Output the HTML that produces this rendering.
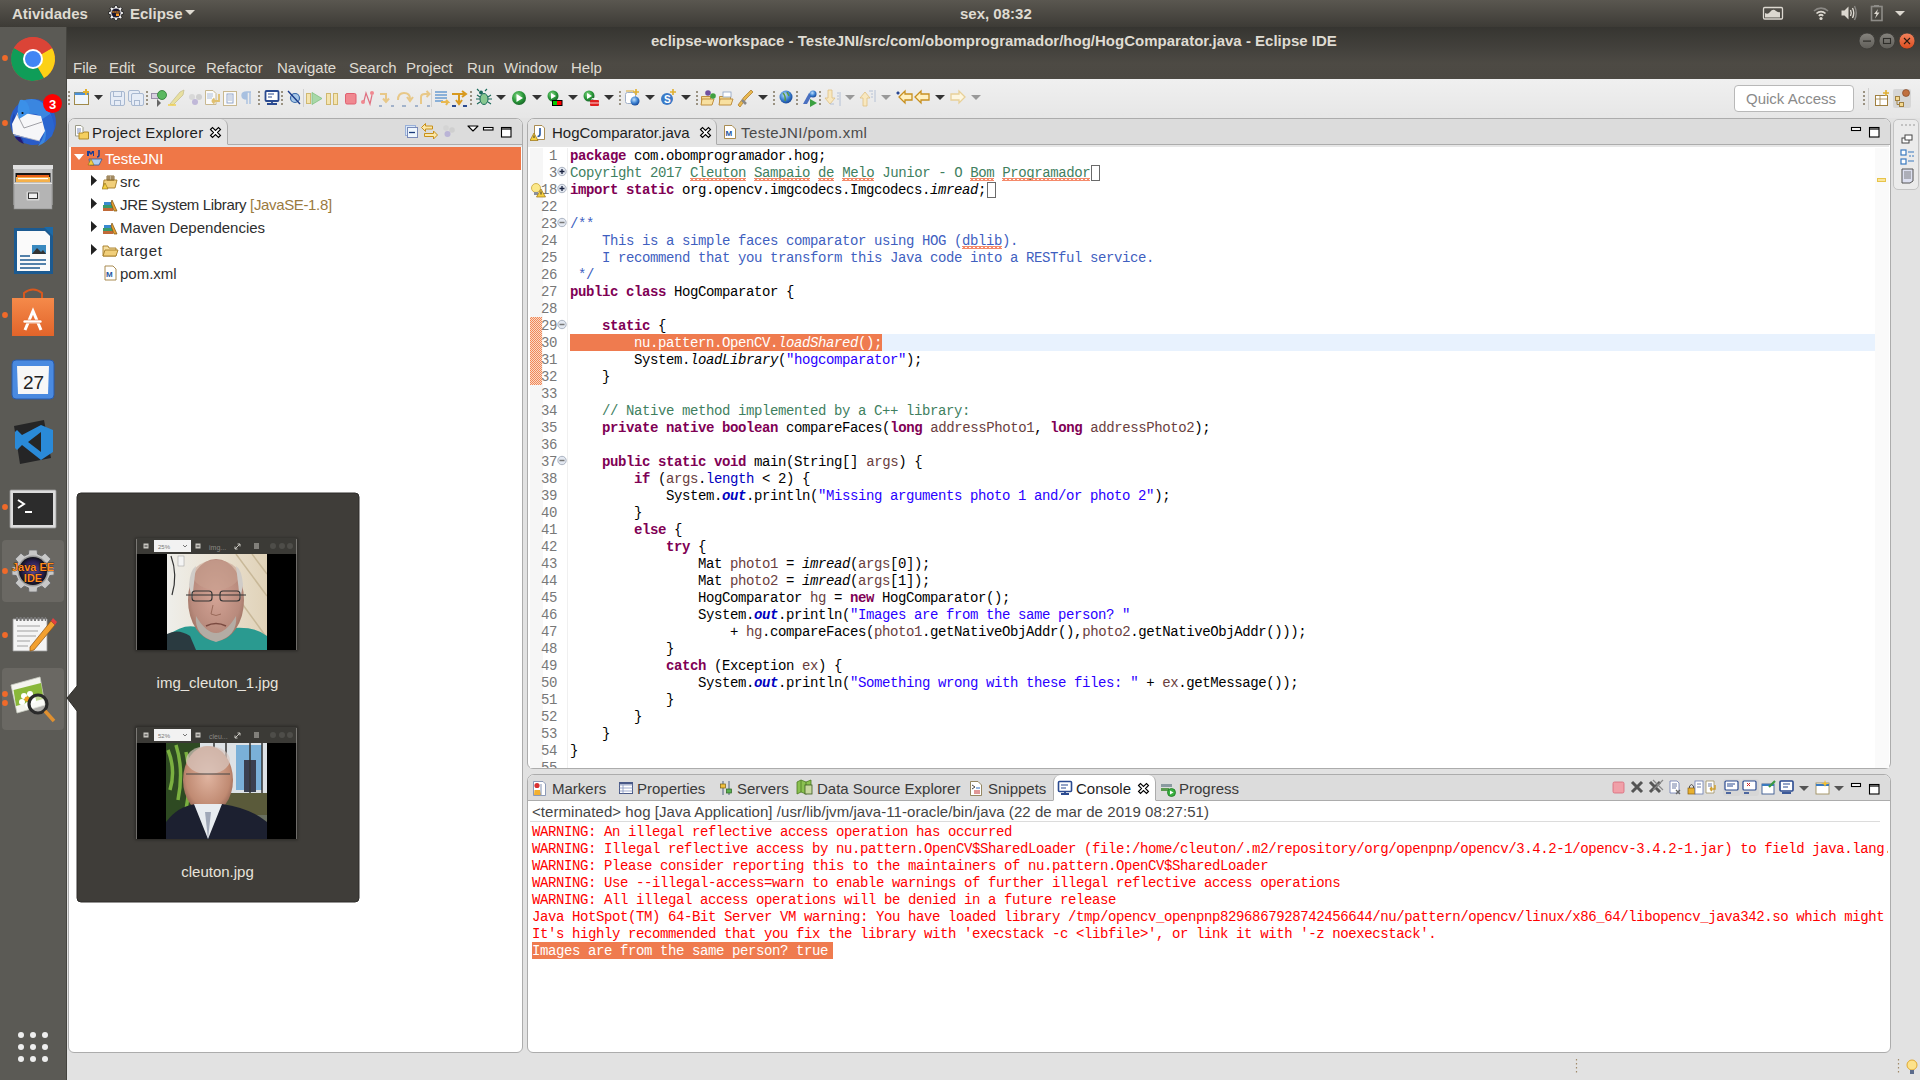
<!DOCTYPE html>
<html><head><meta charset="utf-8"><style>
*{margin:0;padding:0;box-sizing:border-box}
html,body{width:1920px;height:1080px;overflow:hidden;background:#e4e4e4;font-family:"Liberation Sans",sans-serif;}
.a{position:absolute}
.t{position:absolute;white-space:pre;line-height:1}
.mono{font-family:"Liberation Mono",monospace}
#topbar{left:0;top:0;width:1920px;height:27px;background:linear-gradient(#5a5750,#3d3b36)}
#title{left:67px;top:27px;width:1853px;height:52px;background:linear-gradient(#363531,#44423d 45%,#4d4a44 70%,#4c4943)}
#dock{left:0;top:27px;width:67px;height:1053px;background:linear-gradient(90deg,#5b5a55 0,#5b5a55 66px,#45443f 66px)}
#win{left:67px;top:79px;width:1853px;height:1001px;background:#e2e2e2}
#toolbar{left:67px;top:79px;width:1853px;height:39px;background:linear-gradient(#f0f0f0,#e6e6e6)}
.panel{position:absolute;background:#fff;border:1px solid #acacac;border-radius:7px 7px 6px 6px;overflow:hidden}
.phead{position:absolute;left:0;top:0;right:0;background:#dcdcdc;border-bottom:1px solid #acacac}
.ui{font-size:15px;color:#2e2e2e}
.ln{position:absolute;left:0;width:27px;text-align:right;font:14px/17px "Liberation Mono",monospace;letter-spacing:-0.4px;color:#787878;white-space:pre}
.cl{position:absolute;left:40px;font:14px/17px "Liberation Mono",monospace;letter-spacing:-0.4px;color:#000;white-space:pre}
.k{color:#7f0055;font-weight:bold}
.s{color:#2a00ff}
.c{color:#3f7f5f}
.cw{color:#3f7f5f;position:relative}
.cw::after,.dw::after{content:"";position:absolute;left:0;right:0;top:13px;height:3px;background-image:linear-gradient(45deg,transparent 42%,#f58a6a 42%,#f58a6a 62%,transparent 62%),linear-gradient(-45deg,transparent 42%,#f58a6a 42%,#f58a6a 62%,transparent 62%);background-size:4px 3px;background-repeat:repeat-x}
.d{color:#3f5fbf}
.dw{color:#3f5fbf;position:relative}
.f{color:#0000c0;font-weight:bold;font-style:italic}
.fi{color:#0000c0}
.v{color:#6a3e3e}
.i{font-style:italic}
.sel{color:#fff}
.seli{color:#fff;font-style:italic}
.fbox{display:inline-block;width:9px;height:16px;border:1px solid #6a6a6a;vertical-align:-4px;margin-left:1px}

</style></head><body>
<div id="topbar" class="a"></div>
<div class="t" style="left:12px;top:6px;font-size:15px;font-weight:bold;color:#dfdbd2">Atividades</div>
<svg class="a" style="left:107px;top:4px" width="18" height="18" viewBox="0 0 18 18"><path d="M14.58 7.40 L16.39 7.70 L16.39 10.30 L14.58 10.60 L14.07 11.81 L15.14 13.30 L13.30 15.14 L11.81 14.07 L10.60 14.58 L10.30 16.39 L7.70 16.39 L7.40 14.58 L6.19 14.07 L4.70 15.14 L2.86 13.30 L3.93 11.81 L3.42 10.60 L1.61 10.30 L1.61 7.70 L3.42 7.40 L3.93 6.19 L2.86 4.70 L4.70 2.86 L6.19 3.93 L7.40 3.42 L7.70 1.61 L10.30 1.61 L10.60 3.42 L11.81 3.93 L13.30 2.86 L15.14 4.70 L14.07 6.19Z" fill="#f0f0f0" stroke="#111" stroke-width="0.8"/><circle cx="9" cy="9" r="4.6" fill="#1a1830"/><path d="M5.5 8H12.5" stroke="#ff9a20" stroke-width="1.4" stroke-dasharray="1.2 0.8"/><rect x="9" y="9.5" width="3" height="2.5" fill="#ff9a20"/></svg>
<div class="t" style="left:130px;top:6px;font-size:15px;font-weight:bold;color:#dfdbd2">Eclipse</div>
<svg class="a" style="left:185px;top:10px" width="10" height="6"><path d="M0 0H10L5 5Z" fill="#dfdbd2"/></svg>
<div class="t" style="left:960px;top:6px;font-size:15px;font-weight:bold;color:#dfdbd2">sex, 08:32</div>
<svg class="a" style="left:1760px;top:0" width="160" height="27">
 <rect x="3.5" y="7.5" width="19" height="11.5" rx="1.2" fill="none" stroke="#dcd8d0" stroke-width="1.3"/>
 <path d="M5 17.5V13Q8 15 10 12Q13 8 16 11Q19 13 20 12V17.5Z" fill="#dcd8d0"/>
 <path d="M54 11 A10 10 0 0 1 68 11" fill="none" stroke="#8a8884" stroke-width="1.6"/>
 <path d="M56.5 13.5 A6.5 6.5 0 0 1 65.5 13.5" fill="none" stroke="#dcd8d0" stroke-width="1.7"/>
 <path d="M58.8 15.8 A3.2 3.2 0 0 1 63.2 15.8" fill="none" stroke="#dcd8d0" stroke-width="1.7"/>
 <circle cx="61" cy="18.5" r="1.6" fill="#dcd8d0"/>
 <g transform="translate(-9 0)"><path d="M90.5 10.5H93.5L97.5 6.5V19.5L93.5 15.5H90.5Z" fill="#dcd8d0"/>
 <path d="M99.5 10 Q101 13 99.5 16" fill="none" stroke="#dcd8d0" stroke-width="1.4"/>
 <path d="M101.5 8 Q104 13 101.5 18" fill="none" stroke="#dcd8d0" stroke-width="1.4"/>
 <path d="M103.5 6 Q107 13 103.5 20" fill="none" stroke="#8a8884" stroke-width="1.4"/></g><g transform="translate(-10 0)">
 <rect x="121.5" y="6.5" width="10.5" height="14" fill="none" stroke="#8e8c88" stroke-width="1.6"/>
 <rect x="124" y="5" width="5" height="2" fill="#8e8c88"/>
 <path d="M128 9 L124 14 H126.5 L125 18.5 L129.5 12.5 H127Z" fill="#dcd8d0"/></g>
 <path d="M135 11H145L140 16Z" fill="#dcd8d0"/>
</svg>
<div id="title" class="a"></div>
<div class="t" style="left:651px;top:33px;font-size:15px;font-weight:bold;color:#dfdbd2">eclipse-workspace - TesteJNI/src/com/obomprogramador/hog/HogComparator.java - Eclipse IDE</div>
<svg class="a" style="left:1857px;top:31px" width="62" height="20"><defs><linearGradient id="gb" x1="0" y1="0" x2="0" y2="1"><stop offset="0" stop-color="#86847e"/><stop offset="1" stop-color="#5f5d58"/></linearGradient><linearGradient id="go" x1="0" y1="0" x2="0" y2="1"><stop offset="0" stop-color="#f3845e"/><stop offset="1" stop-color="#dc4b1d"/></linearGradient></defs>
<circle cx="10" cy="10" r="8" fill="url(#gb)" stroke="#3a3935" stroke-width="0.8"/><rect x="6" y="9.5" width="8" height="1.2" fill="#2e2d29"/>
<circle cx="30" cy="10" r="8" fill="url(#gb)" stroke="#3a3935" stroke-width="0.8"/><rect x="26.5" y="7.5" width="7" height="5" fill="none" stroke="#2e2d29" stroke-width="1.1"/>
<circle cx="50" cy="10" r="8" fill="url(#go)" stroke="#3a3935" stroke-width="0.8"/><path d="M47 7L53 13M53 7L47 13" stroke="#2a1a10" stroke-width="1.1"/></svg>
<div class="t" style="left:73px;top:60px;font-size:15px;color:#dfdbd2;word-spacing:0">File</div>
<div class="t" style="left:109px;top:60px;font-size:15px;color:#dfdbd2">Edit</div>
<div class="t" style="left:148px;top:60px;font-size:15px;color:#dfdbd2">Source</div>
<div class="t" style="left:206px;top:60px;font-size:15px;color:#dfdbd2">Refactor</div>
<div class="t" style="left:277px;top:60px;font-size:15px;color:#dfdbd2">Navigate</div>
<div class="t" style="left:349px;top:60px;font-size:15px;color:#dfdbd2">Search</div>
<div class="t" style="left:406px;top:60px;font-size:15px;color:#dfdbd2">Project</div>
<div class="t" style="left:467px;top:60px;font-size:15px;color:#dfdbd2">Run</div>
<div class="t" style="left:504px;top:60px;font-size:15px;color:#dfdbd2">Window</div>
<div class="t" style="left:571px;top:60px;font-size:15px;color:#dfdbd2">Help</div>
<div id="dock" class="a"></div>
<div id="win" class="a"></div>
<div id="toolbar" class="a"></div>
<div class="a" style="left:1734px;top:85px;width:120px;height:27px;background:#fff;border:1px solid #b8b8b8;border-radius:4px"></div>
<div class="t" style="left:1746px;top:91px;font-size:15px;color:#8a8a8a">Quick Access</div>

<!-- project explorer -->
<div class="panel" style="left:68px;top:118px;width:455px;height:935px">
  <div class="phead" style="height:26px"></div>
  <div class="a" style="left:0;top:0;width:159px;height:26px;background:#e5e5e5;border-right:1px solid #acacac;border-bottom:1px solid #e5e5e5;border-radius:0 7px 0 0"></div>
  <div class="a" style="left:0;top:26px;width:453px;height:2px;background:#e6e6e6"></div>
  <div class="a" style="left:2px;top:28px;width:450px;height:23px;background:#ef7747"></div>
</div>
<div class="t ui" style="left:92px;top:125px;color:#1e1e1e;letter-spacing:0.3px">Project Explorer</div>

<!-- editor -->
<div class="panel" style="left:527px;top:118px;width:1364px;height:651px">
  <div class="phead" style="height:26px"></div>
  <div class="a" style="left:0;top:0;width:189px;height:26px;background:#e5e5e5;border-right:1px solid #acacac;border-bottom:1px solid #e5e5e5;border-radius:0 7px 0 0"></div>
  <div class="a" style="left:0;top:26px;width:1361px;height:2px;background:#e6e6e6"></div>
</div>

<!-- console -->
<div class="panel" style="left:527px;top:774px;width:1364px;height:279px">
  <div class="phead" style="height:26px"></div>
  <div class="a" style="left:525px;top:0;width:103px;height:26px;background:#fff;border-left:1px solid #acacac;border-right:1px solid #acacac;border-bottom:1px solid #fff;border-radius:7px 7px 0 0"></div>
</div>
<svg class="a" style="left:0;top:27px" width="67" height="1053" viewBox="0 27 67 1053">
 <defs>
  <radialGradient id="tbg" cx="0.5" cy="0.4" r="0.6"><stop offset="0" stop-color="#5fa8f0"/><stop offset="1" stop-color="#1c3f9a"/></radialGradient>
  <linearGradient id="fcab" x1="0" y1="0" x2="0" y2="1"><stop offset="0" stop-color="#d8d8d8"/><stop offset="1" stop-color="#9a9a9a"/></linearGradient>
  <linearGradient id="bag" x1="0" y1="0" x2="0" y2="1"><stop offset="0" stop-color="#f58a4a"/><stop offset="1" stop-color="#e2642a"/></linearGradient>
  <radialGradient id="jee" cx="0.5" cy="0.5" r="0.5"><stop offset="0" stop-color="#5a4a90"/><stop offset="0.7" stop-color="#2a2050"/><stop offset="1" stop-color="#101018"/></radialGradient>
 </defs>
 <!-- chrome -->
 <g transform="translate(33 59)">
  <circle r="22" fill="#db4437"/>
  <path d="M0 0 L-19.05 -11 A22 22 0 0 0 11 19.05Z" fill="#0f9d58"/>
  <path d="M0 0 L11 19.05 A22 22 0 0 0 19.05 -11 Z" fill="#fcd116"/>
  <path d="M0 0 L19.05 -11 A22 22 0 0 0 -19.05 -11Z" fill="#db4437"/>
  <circle r="10" fill="#fff"/><circle r="8" fill="#4285f4"/>
 </g>
 <!-- thunderbird -->
 <path d="M33 99 A23 23 0 1 1 20 141 L14 135 A23 23 0 0 1 33 99Z" fill="#2a5cc8"/>
 <path d="M14 113 Q8 125 16 139 L24 142 L18 128Z" fill="#1f48b0"/>
 <path d="M22 101 Q36 95 46 106 Q55 118 52 132 Q48 142 38 146 Q47 134 44 122 Q40 112 30 114 Q24 116 20 119 Q17 108 22 101Z" fill="#3a86e0"/>
 <path d="M38 122 Q50 128 44 143 L52 136 Q57 124 50 114Z" fill="#2a66d0"/>
 <path d="M12 124 L18 112 L41 116 L45 131 L39 141 L13 134Z" fill="#f6f6f8"/>
 <path d="M17 114 L24 128 L42 122" fill="none" stroke="#8a8a90" stroke-width="0.8"/>
 <path d="M14 135 L40 141" stroke="#b8b8c0" stroke-width="0.8"/>
 <path d="M20 100 Q28 98 30 112 Q24 116 19 119 Q16 108 20 100Z" fill="#3b90e8"/>
 <circle cx="22.5" cy="113" r="1.1" fill="#111"/>
 <path d="M15 137 Q18 142 24 144 L20 137Z" fill="#241a70"/>
 <circle cx="52.5" cy="103.5" r="9.5" fill="#f00"/>
 <text x="52.5" y="108.5" font-family="Liberation Sans" font-weight="bold" font-size="13" fill="#fff" text-anchor="middle">3</text>
 <!-- files -->
 <path d="M13.5 169 L14 165 H52 L52.5 169 V205 H13.5Z" fill="#c4c4c4"/>
 <rect x="13" y="165" width="40" height="4" fill="#e0e0e0"/>
 <rect x="15.5" y="173" width="35" height="10" fill="#151515"/>
 <rect x="17" y="175" width="32" height="8" fill="#e8601a"/>
 <rect x="16" y="177" width="34" height="6" fill="#f4b04a"/>
 <rect x="18" y="178" width="30" height="1.2" fill="#fff"/>
 <rect x="14" y="182.5" width="38" height="26.5" fill="#b4b4b4" stroke="#8a8a8a" stroke-width="0.6"/>
 <rect x="14" y="182.5" width="38" height="1.5" fill="#e4e4e4"/>
 <rect x="26.5" y="191.5" width="13" height="9" rx="1" fill="#d8d8d8"/>
 <rect x="28.5" y="193" width="9" height="5.5" fill="#f2f2f2" stroke="#333" stroke-width="1"/>
 <!-- writer -->
 <path d="M14 228 H46 L53 235 V274 H14Z" fill="#1c5a90"/>
 <path d="M17 231 H45 L50 236 V271 H17Z" fill="#fafafa"/>
 <path d="M44 227 H53 V236Z" fill="#1c6aa8"/>
 <g stroke="#1c5a90" stroke-width="1.5"><path d="M20 256H30M20 260H46M20 264H46M20 268H40"/></g>
 <rect x="32" y="245" width="14" height="9" fill="#3a8ac0"/><path d="M32 254L37 248L41 252L43 250L46 254Z" fill="#333"/>
 <!-- software -->
 <path d="M12 298 H54 V336 H12Z" fill="url(#bag)"/>
 <path d="M24 298 V293 Q33 286 42 293 V298" fill="none" stroke="#d8581e" stroke-width="2"/>
 <path d="M25 330 L33 311 L41 330 M28 322 H38" fill="none" stroke="#fff" stroke-width="3"/>
 <rect x="23" y="320" width="19" height="3" rx="1.5" fill="#fff" stroke="#e2642a" stroke-width="0.6"/>
 <!-- calendar -->
 <rect x="12" y="360" width="42" height="39" rx="4" fill="#4a8ae0" stroke="#2a5aa8" stroke-width="1"/>
 <path d="M17 366 H49 L48 394 H18Z" fill="#f7f7f7"/>
 <text x="33.5" y="389" font-family="Liberation Sans" font-size="19" fill="#222" text-anchor="middle">27</text>
 <!-- vscode -->
 <path d="M14 426 L44 420 L51 458 L20 464Z" fill="#252526"/>
 <path d="M41 425 L53 430 V452 L41 460 L22 445 L17 450 L15 448 V432 L17 430 L22 435Z" fill="#2a8ad8"/>
 <path d="M41 432 V452 L28 442Z" fill="#252526"/>
 <!-- terminal -->
 <rect x="10" y="490" width="46" height="38" rx="1" fill="#dcdcdc" stroke="#9a9a9a" stroke-width="0.8"/>
 <rect x="13" y="493" width="40" height="32" fill="#2c2c2c"/>
 <path d="M18 500 L24 504 L18 508" fill="none" stroke="#fff" stroke-width="2"/>
 <path d="M25 512 H32" stroke="#fff" stroke-width="2"/>
 <!-- java ee highlight -->
 <rect x="2" y="540" width="62" height="62" rx="4" fill="#6a6863"/>
 <g transform="translate(33 571)">
  <path d="M16.90 -4.53 L21.10 -4.10 L21.10 4.10 L16.90 4.53 L15.16 8.75 L17.82 12.02 L12.02 17.82 L8.75 15.16 L4.53 16.90 L4.10 21.10 L-4.10 21.10 L-4.53 16.90 L-8.75 15.16 L-12.02 17.82 L-17.82 12.02 L-15.16 8.75 L-16.90 4.53 L-21.10 4.10 L-21.10 -4.10 L-16.90 -4.53 L-15.16 -8.75 L-17.82 -12.02 L-12.02 -17.82 L-8.75 -15.16 L-4.53 -16.90 L-4.10 -21.10 L4.10 -21.10 L4.53 -16.90 L8.75 -15.16 L12.02 -17.82 L17.82 -12.02 L15.16 -8.75Z" fill="#c8c8c8" stroke="#6a6a6a" stroke-width="1"/>
  <circle r="15.5" fill="#9a9a9a"/>
  <circle r="14" fill="url(#jee)"/>
  <text x="0" y="-0.5" font-family="Liberation Sans" font-weight="bold" font-size="11" fill="#ff8a1a" text-anchor="middle" stroke="#000" stroke-width="0.7" paint-order="stroke">Java EE</text>
  <text x="0" y="10.5" font-family="Liberation Sans" font-weight="bold" font-size="11" fill="#ff8a1a" text-anchor="middle" stroke="#000" stroke-width="0.7" paint-order="stroke">IDE</text>
 </g>
 <!-- gedit -->
 <path d="M13 619 H47 V651 H13Z" fill="#f4f4f4" stroke="#9a9a9a" stroke-width="0.8"/>
 <path d="M16 619 H46" stroke="#777" stroke-width="4" stroke-dasharray="2 1.6"/>
 <g stroke="#a0a0a0" stroke-width="1"><path d="M17 626H40M17 631H38M17 636H36M17 641H30M17 646H28"/></g>
 <path d="M30 647 L51 621 L55 625 L34 650 L30 651Z" fill="#f2a030" stroke="#8a5010" stroke-width="0.7"/>
 <path d="M51 621 L53 618 L57 622 L55 625Z" fill="#e04040"/>
 <!-- eog highlight -->
 <rect x="2" y="668" width="62" height="62" rx="4" fill="#6a6863"/>
 <path d="M11 685 L40 677 L45 705 L17 713Z" fill="#f4f4ee" stroke="#c8ccc0" stroke-width="0.8"/>
 <path d="M13.5 690 L41 683 L43.5 699 L16 706Z" fill="#8ab83a"/>
 <g fill="#fff"><circle cx="24" cy="696" r="3"/><circle cx="30" cy="694" r="3"/><circle cx="33" cy="700" r="3"/><circle cx="22" cy="702" r="3"/><circle cx="28" cy="705" r="3"/></g><circle cx="27" cy="699" r="2.5" fill="#f0a020"/>
 <circle cx="38" cy="704" r="9" fill="rgba(255,255,255,0.45)" stroke="#2a2a2a" stroke-width="3.2"/>
 <path d="M45 711 L54 721" stroke="#e09030" stroke-width="3.5"/>
 <!-- running dots -->
 <g fill="#f06a2a"><circle cx="5" cy="58" r="2.9"/><circle cx="5" cy="123" r="2.9"/><circle cx="5" cy="315" r="2.9"/><circle cx="5" cy="507" r="2.9"/><circle cx="5" cy="571" r="2.9"/><circle cx="5" cy="635" r="2.9"/><circle cx="5" cy="694" r="2.9"/><circle cx="5" cy="703" r="2.9"/></g>
  <!-- apps grid -->
 <g fill="#eeeeee"><circle cx="21" cy="1035" r="3"/><circle cx="33" cy="1035" r="3"/><circle cx="45" cy="1035" r="3"/><circle cx="21" cy="1047" r="3"/><circle cx="33" cy="1047" r="3"/><circle cx="45" cy="1047" r="3"/><circle cx="21" cy="1059" r="3"/><circle cx="33" cy="1059" r="3"/><circle cx="45" cy="1059" r="3"/></g>
</svg>
<svg class="a" style="left:67px;top:84px" width="1853" height="28" viewBox="67 84 1853 28">
 <defs>
  <radialGradient id="grn" cx="0.4" cy="0.35" r="0.65"><stop offset="0" stop-color="#8ad88a"/><stop offset="0.6" stop-color="#2a9a3a"/><stop offset="1" stop-color="#1a6a2a"/></radialGradient>
  <radialGradient id="glob" cx="0.4" cy="0.35" r="0.65"><stop offset="0" stop-color="#bfe0ff"/><stop offset="0.6" stop-color="#3a80d0"/><stop offset="1" stop-color="#1a4a9a"/></radialGradient>
 </defs>
 <g fill="#9a9282"><!-- dotted separators -->
  <path id="sep" d="M68 91h2v2h-2zM68 95h2v2h-2zM68 99h2v2h-2zM68 103h2v2h-2z"/>
  <use href="#sep" x="78"/><use href="#sep" x="190"/><use href="#sep" x="213"/><use href="#sep" x="402"/><use href="#sep" x="551"/><use href="#sep" x="628"/><use href="#sep" x="705"/><use href="#sep" x="728"/><use href="#sep" x="751"/><use href="#sep" x="1795"/>
 </g>
 <path d="M303.5 89V107M431.5 89V107M1868.5 88V110" stroke="#d0d0d0"/>
 <!-- new -->
 <rect x="74.5" y="92.5" width="14" height="12" fill="#f0f6fc" stroke="#a08a4a"/><rect x="74.5" y="92.5" width="14" height="2.5" fill="#4a90d8"/><path d="M86 89V95M83 92H89" stroke="#e0b030" stroke-width="2"/>
 <path d="M94 95H103L98.5 100Z" fill="#333"/>
 <!-- save, save all (disabled) -->
 <g fill="#e6ecf6" stroke="#a8b8d0"><rect x="110.5" y="91.5" width="14" height="14" rx="1.5"/><rect x="113.5" y="91.5" width="8" height="5"/><rect x="114.5" y="100.5" width="6" height="5"/>
 <rect x="128.5" y="90.5" width="11" height="11" rx="1.5"/><rect x="131.5" y="93.5" width="12" height="12" rx="1.5"/><rect x="134.5" y="100.5" width="5" height="5"/></g>
 <!-- 151 build-ish -->
 <rect x="151.5" y="93.5" width="7" height="5" fill="#d8d0e0" stroke="#9a90a8"/><circle cx="162" cy="95" r="4.5" fill="#5ab860" stroke="#2a7a30" stroke-width="0.8"/><path d="M157 99L161 103L157 107Z" fill="#666"/>
 <!-- highlighter -->
 <path d="M170 104L180 92L184 90L183 95L173 105Z" fill="#e8e0a0" stroke="#c8c090" stroke-width="0.8"/><path d="M168 105H176" stroke="#f0d050" stroke-width="1.5"/>
 <!-- circles -->
 <circle cx="192" cy="97" r="3" fill="#d8d8d8"/><circle cx="199" cy="97" r="3" fill="#d0d0d0"/><circle cx="195" cy="102" r="3" fill="#c0b8d8"/>
 <!-- 205 doc arrow -->
 <path d="M205.5 90.5H213L216 93.5V104.5H205.5Z" fill="#fafafa" stroke="#c8b890"/><path d="M207 94H213M207 96H213M207 98H212" stroke="#9ab0d0" stroke-width="0.8"/><path d="M219 94V101H212M212 101L214.5 98.5M212 101L214.5 103.5" fill="none" stroke="#e0c070" stroke-width="1.8"/>
 <!-- 223 -->
 <rect x="223.5" y="91.5" width="13" height="14" fill="#fafafa" stroke="#c8b890"/><rect x="227" y="94" width="6" height="9" fill="none" stroke="#8aa0c8" stroke-width="0.9"/><path d="M228 96H232M228 98H232M228 100H232" stroke="#8aa0c8" stroke-width="0.7"/>
 <!-- pilcrow -->
 <path d="M247 104V92M250 104V92M247 92H251M247 92Q242 92 242 95.5Q242 99 247 99" fill="#a8c0e0" stroke="#a8c0e0" stroke-width="1.4"/>
 <!-- monitor -->
 <rect x="265.5" y="91" width="13" height="10" rx="1" fill="#fff" stroke="#2a4a90" stroke-width="1.8"/><path d="M268 94H274M268 97H272" stroke="#2a4a90" stroke-width="1.1"/><path d="M267 104H277M272 101V104" stroke="#2a4a90" stroke-width="1.8"/>
 <!-- crossed circle -->
 <circle cx="295" cy="98" r="4.5" fill="#a8c8e8" stroke="#3a6aa8" stroke-width="1.2"/><path d="M288 91L300 104" stroke="#1a3a8a" stroke-width="1.4"/>
 <!-- resume -->
 <rect x="306.5" y="93.5" width="4" height="10" fill="#f4e4b0" stroke="#d0b870"/><path d="M312 92.5L322 98.5L312 104.5Z" fill="#a8d8a8" stroke="#80c080" stroke-width="0.8"/>
 <!-- suspend -->
 <rect x="326.5" y="93.5" width="4" height="11" fill="#f4e4b0" stroke="#d0b870"/><rect x="333.5" y="93.5" width="4" height="11" fill="#f4e4b0" stroke="#d0b870"/>
 <!-- terminate -->
 <rect x="345.5" y="93.5" width="10.5" height="10.5" rx="1.5" fill="#f08890" stroke="#e06070"/>
 <!-- disconnect -->
 <circle cx="363" cy="102" r="2" fill="#f08890"/><circle cx="372" cy="93" r="2" fill="#f08890"/><path d="M364 101L366 93L370 104L372 95" fill="none" stroke="#e07080" stroke-width="1.2"/>
 <!-- step into/over/return -->
 <path d="M380 94H386V101M383 98.5L386 102L389 98.5" fill="none" stroke="#e8c888" stroke-width="2"/><path d="M379 106H382M391 106H394" stroke="#8aa0c0" stroke-width="1.5"/>
 <path d="M398 100Q398 93 404 93Q410 93 410 99M407 97L410 101L413 97" fill="none" stroke="#e8c888" stroke-width="2"/><path d="M402 106H406" stroke="#8aa0c0" stroke-width="1.5"/>
 <path d="M421 104V97Q421 94 425 94H429M426.5 91L429.5 94L426.5 97" fill="none" stroke="#e8c888" stroke-width="2"/><path d="M415 106H418M427 106H430" stroke="#8aa0c0" stroke-width="1.5"/>
 <!-- drop to frame -->
 <path d="M435 92H447M435 95H447M435 98H447M435 101H443" stroke="#8ab0d8" stroke-width="1.8"/><path d="M441 102H448L446 100M448 102L446 105" fill="none" stroke="#e8b850" stroke-width="2"/>
 <!-- step filter -->
 <path d="M452 94H465M462 91L466 94L462 97M459 94V103M456 100L459 104L462 100" fill="none" stroke="#d89a20" stroke-width="2"/><path d="M452 106H456M463 106H467" stroke="#2a4a90" stroke-width="1.8"/>
 <!-- bug -->
 <ellipse cx="484" cy="99" rx="4" ry="5.5" fill="#88c890" stroke="#1a6a5a" stroke-width="1"/><circle cx="481" cy="92.5" r="2" fill="#1a6a5a"/><path d="M477 95L480 97M491 95L488 97M476 99H480M492 99H488M477 104L480 102M491 104L488 102M479 91L477 89M485 91L487 89" stroke="#1a6a5a" stroke-width="1.1"/>
 <path d="M496 95H506L501 100Z" fill="#333"/>
 <!-- run -->
 <circle cx="519" cy="98" r="7" fill="url(#grn)"/><path d="M516.5 94L523 98L516.5 102Z" fill="#fff"/>
 <path d="M532 95H542L537 100Z" fill="#333"/>
 <!-- coverage -->
 <circle cx="553" cy="96" r="5.5" fill="url(#grn)"/><path d="M551 93L556 96L551 99Z" fill="#fff"/><rect x="552.5" y="100.5" width="9.5" height="5" fill="#f00" stroke="#000"/><rect x="553" y="101" width="4" height="4" fill="#0c0"/>
 <path d="M568 95H578L573 100Z" fill="#333"/>
 <!-- ext tools -->
 <circle cx="589" cy="96" r="5.5" fill="url(#grn)"/><path d="M587 93L592 96L587 99Z" fill="#fff"/><rect x="590" y="100" width="9" height="6" rx="1" fill="#e02020"/><path d="M592 100V98.5H597V100M590 103H599" stroke="#fff" stroke-width="0.8" fill="none"/>
 <path d="M604 95H614L609 100Z" fill="#333"/>
 <!-- new web -->
 <rect x="625.5" y="92.5" width="10" height="11" rx="2" fill="#fff" stroke="#a0b0c8"/><path d="M626 91H634" stroke="#e0c070" stroke-width="1.5"/><circle cx="635" cy="101" r="4.5" fill="url(#glob)"/><path d="M636 89V95M633 92H639" stroke="#e0b030" stroke-width="1.6"/>
 <path d="M645 95H655L650 100Z" fill="#333"/>
 <!-- spring S -->
 <circle cx="667" cy="99" r="6" fill="#3a7ac8"/><text x="664" y="103" font-family="Liberation Sans" font-weight="bold" font-size="10" fill="#fff">S</text><path d="M673 89V95M670 92H676" stroke="#e0b030" stroke-width="1.6"/>
 <path d="M681 95H691L686 100Z" fill="#333"/>
 <!-- open folders -->
 <path d="M701.5 96.5H710.5V104.5H701.5Z" fill="#f4d890" stroke="#c09040"/><path d="M702 99H714L712 105H701Z" fill="#f8e0a0" stroke="#c09040"/><circle cx="708" cy="93" r="2.8" fill="#7050a0"/><circle cx="713" cy="96" r="2.8" fill="#40a040"/>
 <path d="M719.5 96.5H730.5V104.5H719.5Z" fill="#f4d890" stroke="#c09040"/><rect x="723" y="92" width="8" height="5" fill="#fff" stroke="#8aa0c0" stroke-width="0.8"/><path d="M720 99H733L731 105H719Z" fill="#f8e0a0" stroke="#c09040"/>
 <!-- pen -->
 <path d="M738 105L744 97L751 90L753 92L746 99L740 107Z" fill="#e8b850" stroke="#b08030" stroke-width="0.8"/><path d="M742 100L746 104" stroke="#888" stroke-width="2.5"/>
 <path d="M758 95H768L763 100Z" fill="#333"/>
 <!-- globe -->
 <circle cx="786" cy="97" r="6.5" fill="url(#glob)"/><path d="M783 93Q786 96 785 101M787 92L789 96" stroke="#5a9a40" stroke-width="1.5" fill="none"/>
 <!-- icon green arrow -->
 <path d="M803 104L809 93L812 95L807 104Z" fill="#4a70c0"/><circle cx="813" cy="94" r="3.5" fill="url(#glob)"/><path d="M810 99L817 103L810 107Z" fill="#3aa040"/>
 <!-- down arrow doc -->
 <path d="M828 90V98H825L830 104L835 98H832V90Z" fill="#f8e8c0" stroke="#e0c080" stroke-width="0.8"/><path d="M837 93H839M837 96H839M837 99H839M830 104H834M840 92V106" stroke="#a8b8d0" stroke-width="0.8"/>
 <path d="M845 95H855L850 100Z" fill="#999"/>
 <!-- up arrow doc -->
 <path d="M863 106V98H860L865 92L870 98H867V106Z" fill="#f8e8c0" stroke="#e0c080" stroke-width="0.8"/><path d="M869 91H873M871 94H873M871 97H873M875 90V102" stroke="#a8b8d0" stroke-width="0.8"/>
 <path d="M881 95H891L886 100Z" fill="#999"/>
 <!-- back arrows -->
 <path d="M899 97L905 91V94H912V100H905V103Z" fill="#fff0c0" stroke="#c89020" stroke-width="1.3"/><path d="M897 92L899 94M899 92L897 94M898 91V95M896 93H900" stroke="#1a3a8a" stroke-width="0.8"/>
 <path d="M915 97L921 91V94H929V100H921V103Z" fill="#fff0c0" stroke="#c89020" stroke-width="1.3"/>
 <path d="M935 95H945L940 100Z" fill="#333"/>
 <path d="M965 97L959 91V94H951V100H959V103Z" fill="#fdf6e0" stroke="#e8d098" stroke-width="1.3"/>
 <path d="M971 95H981L976 100Z" fill="#999"/>
 <!-- perspectives -->
 <rect x="1875.5" y="95.5" width="12" height="10" fill="#fff" stroke="#a08040"/><path d="M1875 99H1888M1880 96V106" stroke="#a08040" stroke-width="0.8"/><path d="M1886 90V96M1883 93H1889" stroke="#e0b030" stroke-width="1.6"/>
 <rect x="1893" y="89" width="18" height="19" rx="2" fill="#d6d6d6"/><rect x="1895.5" y="96.5" width="4" height="4" fill="#f4d890" stroke="#a08040"/><rect x="1899.5" y="102.5" width="4" height="4" fill="#f4d890" stroke="#a08040"/><path d="M1897 100V104.5H1899.5" stroke="#a08040" fill="none"/><circle cx="1906" cy="93" r="3.5" fill="#c07040" stroke="#7a4020" stroke-width="0.6"/>
</svg>
<!-- editor ruler / gutter -->
<div class="a" style="left:530px;top:148px;width:13px;height:620px;background:#f6f6f6"></div>
<div class="a" style="left:567px;top:148px;width:1px;height:620px;background:#f0f0f0"></div>
<div class="a" style="left:530px;top:317px;width:12px;height:68px;background:repeating-conic-gradient(#f08858 0 25%,#fbd9c6 0 50%) 0 0/2px 2px"></div>
<div class="a" style="left:570px;top:334px;width:1305px;height:17px;background:#e8f2fe"></div>
<div class="a" style="left:570px;top:334px;width:312px;height:17px;background:#ef7b4f"></div>
<div class="a" style="left:1875px;top:148px;width:14px;height:620px;background:#fafafa"></div>
<div class="a" style="left:1877px;top:178px;width:9px;height:4px;background:#fbe59a;border:1px solid #e7c44a"></div>
<div class="a" style="left:530px;top:147px;width:1345px;height:621px;overflow:hidden"><div class="a" style="left:0;top:-147px">
<div class="ln" style="top:148px">1</div>
<div class="cl" style="top:148px"><span class="k">package</span> com.obomprogramador.hog;</div>
<div class="ln" style="top:165px">3</div>
<div class="cl" style="top:165px"><span class="c">Copyright 2017 </span><span class="cw">Cleuton</span><span class="c"> </span><span class="cw">Sampaio</span><span class="c"> </span><span class="cw">de</span><span class="c"> </span><span class="cw">Melo</span><span class="c"> Junior - O </span><span class="cw">Bom</span><span class="c"> </span><span class="cw">Programador</span><span class="fbox"></span></div>
<div class="ln" style="top:182px">18</div>
<div class="cl" style="top:182px"><span class="k">import</span> <span class="k">static</span> org.opencv.imgcodecs.Imgcodecs.<span class="i">imread</span>;<span class="fbox"></span></div>
<div class="ln" style="top:199px">22</div>
<div class="ln" style="top:216px">23</div>
<div class="cl" style="top:216px"><span class="d">/**</span></div>
<div class="ln" style="top:233px">24</div>
<div class="cl" style="top:233px"><span class="d">    This is a simple faces comparator using HOG (</span><span class="dw">dblib</span><span class="d">).</span></div>
<div class="ln" style="top:250px">25</div>
<div class="cl" style="top:250px"><span class="d">    I recommend that you transform this Java code into a RESTful service.</span></div>
<div class="ln" style="top:267px">26</div>
<div class="cl" style="top:267px"><span class="d"> */</span></div>
<div class="ln" style="top:284px">27</div>
<div class="cl" style="top:284px"><span class="k">public</span> <span class="k">class</span> HogComparator {</div>
<div class="ln" style="top:301px">28</div>
<div class="ln" style="top:318px">29</div>
<div class="cl" style="top:318px">    <span class="k">static</span> {</div>
<div class="ln" style="top:335px">30</div>
<div class="cl" style="top:335px"><span class="sel">        nu.pattern.OpenCV.</span><span class="seli">loadShared</span><span class="sel">();</span></div>
<div class="ln" style="top:352px">31</div>
<div class="cl" style="top:352px">        System.<span class="i">loadLibrary</span>(<span class="s">&quot;hogcomparator&quot;</span>);</div>
<div class="ln" style="top:369px">32</div>
<div class="cl" style="top:369px">    }</div>
<div class="ln" style="top:386px">33</div>
<div class="ln" style="top:403px">34</div>
<div class="cl" style="top:403px">    <span class="c">// Native method implemented by a C++ library:</span></div>
<div class="ln" style="top:420px">35</div>
<div class="cl" style="top:420px">    <span class="k">private</span> <span class="k">native</span> <span class="k">boolean</span> compareFaces(<span class="k">long</span> <span class="v">addressPhoto1</span>, <span class="k">long</span> <span class="v">addressPhoto2</span>);</div>
<div class="ln" style="top:437px">36</div>
<div class="ln" style="top:454px">37</div>
<div class="cl" style="top:454px">    <span class="k">public</span> <span class="k">static</span> <span class="k">void</span> main(String[] <span class="v">args</span>) {</div>
<div class="ln" style="top:471px">38</div>
<div class="cl" style="top:471px">        <span class="k">if</span> (<span class="v">args</span>.<span class="fi">length</span> &lt; 2) {</div>
<div class="ln" style="top:488px">39</div>
<div class="cl" style="top:488px">            System.<span class="f">out</span>.println(<span class="s">&quot;Missing arguments photo 1 and/or photo 2&quot;</span>);</div>
<div class="ln" style="top:505px">40</div>
<div class="cl" style="top:505px">        }</div>
<div class="ln" style="top:522px">41</div>
<div class="cl" style="top:522px">        <span class="k">else</span> {</div>
<div class="ln" style="top:539px">42</div>
<div class="cl" style="top:539px">            <span class="k">try</span> {</div>
<div class="ln" style="top:556px">43</div>
<div class="cl" style="top:556px">                Mat <span class="v">photo1</span> = <span class="i">imread</span>(<span class="v">args</span>[0]);</div>
<div class="ln" style="top:573px">44</div>
<div class="cl" style="top:573px">                Mat <span class="v">photo2</span> = <span class="i">imread</span>(<span class="v">args</span>[1]);</div>
<div class="ln" style="top:590px">45</div>
<div class="cl" style="top:590px">                HogComparator <span class="v">hg</span> = <span class="k">new</span> HogComparator();</div>
<div class="ln" style="top:607px">46</div>
<div class="cl" style="top:607px">                System.<span class="f">out</span>.println(<span class="s">&quot;Images are from the same person? &quot;</span></div>
<div class="ln" style="top:624px">47</div>
<div class="cl" style="top:624px">                    + <span class="v">hg</span>.compareFaces(<span class="v">photo1</span>.getNativeObjAddr(),<span class="v">photo2</span>.getNativeObjAddr()));</div>
<div class="ln" style="top:641px">48</div>
<div class="cl" style="top:641px">            }</div>
<div class="ln" style="top:658px">49</div>
<div class="cl" style="top:658px">            <span class="k">catch</span> (Exception <span class="v">ex</span>) {</div>
<div class="ln" style="top:675px">50</div>
<div class="cl" style="top:675px">                System.<span class="f">out</span>.println(<span class="s">&quot;Something wrong with these files: &quot;</span> + <span class="v">ex</span>.getMessage());</div>
<div class="ln" style="top:692px">51</div>
<div class="cl" style="top:692px">            }</div>
<div class="ln" style="top:709px">52</div>
<div class="cl" style="top:709px">        }</div>
<div class="ln" style="top:726px">53</div>
<div class="cl" style="top:726px">    }</div>
<div class="ln" style="top:743px">54</div>
<div class="cl" style="top:743px">}</div>
<div class="ln" style="top:760px">55</div>
</div></div>
<!-- project explorer header items -->
<svg class="a" style="left:74px;top:124px" width="16" height="16"><path d="M1.5 1.5H7L9 3.5V12H1.5Z" fill="#fff" stroke="#9a9a88"/><path d="M3 5H7M3 7H7M3 9H6" stroke="#7a8ab8"/><path d="M5 9H9L10 8H14.5V15H5Z" fill="#f5cf5e" stroke="#b08a2a"/></svg>
<svg class="a" style="left:209px;top:126px" width="13" height="13"><path d="M1.5 3.5L3.5 1.5L6.5 4.5L9.5 1.5L11.5 3.5L8.5 6.5L11.5 9.5L9.5 11.5L6.5 8.5L3.5 11.5L1.5 9.5L4.5 6.5Z" fill="#fff" stroke="#000" stroke-width="1.1" stroke-linejoin="miter"/></svg>
<svg class="a" style="left:395px;top:118px" width="125" height="28">
 <rect x="405.5" y="125.5" width="10" height="10" fill="#d8e8f8" stroke="#9ab0d8" transform="translate(-395 -118)"/>
 <rect x="407.5" y="127.5" width="10" height="10" fill="#eef6fc" stroke="#7a8ab8" transform="translate(-395 -118)"/>
 <path d="M409 132.5H415" stroke="#1a3a7a" stroke-width="1.3" transform="translate(-395 -118)"/>
 <g transform="translate(-395 -118)" fill="#fbe7a8" stroke="#c8901a" stroke-width="1" stroke-linejoin="round">
  <path d="M421.5 127.5L425.5 123.5V126H432.5V129H425.5V131.5Z"/>
  <path d="M437.5 135L433.5 139V136.5H424.5V133.5H433.5V131Z"/>
 </g>
 <g transform="translate(-395 -118)"><circle cx="446" cy="128" r="2.8" fill="#d4d4d4"/><circle cx="452" cy="130" r="2.8" fill="#cfcfcf"/><circle cx="447.5" cy="134" r="3" fill="#bab4d6"/></g>
 <path d="M73 8H83L78 13Z" fill="#fff" stroke="#000" stroke-width="1.1" stroke-linejoin="round"/>
 <rect x="88.5" y="9.5" width="9.5" height="2.5" fill="#fff" stroke="#000" stroke-width="1.1"/>
 <rect x="106.5" y="9.5" width="9.5" height="9.5" fill="#fff" stroke="#000" stroke-width="1.1"/><path d="M106.5 11H116" stroke="#000" stroke-width="1.2"/>
</svg>
<!-- tree -->
<svg class="a" style="left:74px;top:154px" width="10" height="8"><path d="M0 0H10L5 6Z" fill="#fff"/></svg>
<svg class="a" style="left:86px;top:149px" width="18" height="18"><path d="M3 10H16L13 16H4Z" fill="#aecdf0" stroke="#2a5aa0" stroke-width="0.8"/><path d="M1 2H4L5 4L6 2H8V7H7V4L5 6L3 4V7H1Z" fill="#1c3f94"/><path d="M13 1V6Q13 8 11 8" fill="none" stroke="#1c3f94" stroke-width="1.5"/><path d="M5 10L8 16H2Z" fill="#f4cf40" stroke="#8a6a10" stroke-width="0.6"/></svg>
<div class="t ui" style="left:105px;top:151px;color:#fff">TesteJNI</div>
<svg class="a" style="left:91px;top:175px" width="7" height="11"><path d="M0 0L6 5.5L0 11Z" fill="#222"/></svg>
<svg class="a" style="left:102px;top:174px" width="17" height="16"><path d="M2 6H15L13 14H1Z" fill="#f1cf7a" stroke="#a57c25" stroke-width="0.9"/><path d="M5 2H12V6H5Z M7 2V6M10 2V6M5 4H12" fill="none" stroke="#7a5a20" stroke-width="0.9"/><path d="M3 9L6 15H0Z" fill="#f4cf40" stroke="#8a6a10" stroke-width="0.6"/></svg>
<div class="t ui" style="left:120px;top:174px">src</div>
<svg class="a" style="left:91px;top:198px" width="7" height="11"><path d="M0 0L6 5.5L0 11Z" fill="#222"/></svg>
<svg class="a" style="left:102px;top:197px" width="17" height="16"><rect x="1" y="11" width="10" height="3" fill="#c06a38"/><rect x="1" y="8" width="10" height="3" fill="#3a9a6a"/><rect x="2" y="5" width="8" height="3" fill="#3a8ad0"/><path d="M10 3L15 14H12L9 6Z" fill="#e8a030" stroke="#7a5010" stroke-width="0.7"/></svg>
<div class="t ui" style="left:120px;top:197px;letter-spacing:-0.35px">JRE System Library <span style="color:#9a7a3e">[JavaSE-1.8]</span></div>
<svg class="a" style="left:91px;top:221px" width="7" height="11"><path d="M0 0L6 5.5L0 11Z" fill="#222"/></svg>
<svg class="a" style="left:102px;top:220px" width="17" height="16"><rect x="1" y="11" width="10" height="3" fill="#c06a38"/><rect x="1" y="8" width="10" height="3" fill="#3a9a6a"/><rect x="2" y="5" width="8" height="3" fill="#3a8ad0"/><path d="M10 3L15 14H12L9 6Z" fill="#e8a030" stroke="#7a5010" stroke-width="0.7"/></svg>
<div class="t ui" style="left:120px;top:220px">Maven Dependencies</div>
<svg class="a" style="left:91px;top:244px" width="7" height="11"><path d="M0 0L6 5.5L0 11Z" fill="#222"/></svg>
<svg class="a" style="left:102px;top:243px" width="17" height="15"><path d="M1 3H6L7 5H14V13H1Z" fill="#f6dfa0" stroke="#a57c25" stroke-width="0.9"/><path d="M3 7H16L14 13H1Z" fill="#f1cf7a" stroke="#a57c25" stroke-width="0.9"/></svg>
<div class="t ui" style="left:120px;top:243px;letter-spacing:0.7px">target</div>
<svg class="a" style="left:104px;top:265px" width="13" height="16"><path d="M1 1H9L12 4V15H1Z" fill="#fff" stroke="#a08040" stroke-width="0.9"/><text x="2" y="12" font-family="Liberation Sans" font-weight="bold" font-size="8" fill="#2456a0">M</text></svg>
<div class="t ui" style="left:120px;top:266px">pom.xml</div>
<!-- editor tabs -->
<svg class="a" style="left:530px;top:124px" width="17" height="18"><path d="M4.5 1.5H12L14.5 4V15.5H4.5Z" fill="#fff" stroke="#a08040" stroke-width="0.9"/><path d="M10 4V10Q10 12.5 7.5 12.5" fill="none" stroke="#2456a0" stroke-width="1.6"/><path d="M4 9L8 16.5H0Z" fill="#f4cf40" stroke="#9a7010" stroke-width="0.7"/><path d="M4 11.5V14" stroke="#333" stroke-width="1"/></svg>
<div class="t ui" style="left:552px;top:125px;color:#1e1e1e">HogComparator.java</div>
<svg class="a" style="left:699px;top:126px" width="13" height="13"><path d="M1.5 3.5L3.5 1.5L6.5 4.5L9.5 1.5L11.5 3.5L8.5 6.5L11.5 9.5L9.5 11.5L6.5 8.5L3.5 11.5L1.5 9.5L4.5 6.5Z" fill="#fff" stroke="#000" stroke-width="1.1" stroke-linejoin="miter"/></svg>
<svg class="a" style="left:723px;top:124px" width="14" height="16"><path d="M1.5 1.5H9L12.5 5V14.5H1.5Z" fill="#fff" stroke="#a08040" stroke-width="0.9"/><text x="2.5" y="12" font-family="Liberation Sans" font-weight="bold" font-size="8" fill="#2456a0">M</text></svg>
<div class="t ui" style="left:741px;top:125px;color:#4a4a4a;letter-spacing:0.45px">TesteJNI/pom.xml</div>
<svg class="a" style="left:1847px;top:122px" width="40" height="18"><rect x="4.5" y="5.5" width="9" height="3" fill="#fff" stroke="#000" stroke-width="1.1"/><rect x="22.5" y="5.5" width="9.5" height="9.5" fill="#fff" stroke="#000" stroke-width="1.1"/><path d="M22.5 7H32" stroke="#000" stroke-width="1.2"/></svg>
<!-- fold markers -->
<svg class="a" style="left:557px;top:146px" width="11" height="620">
 <g fill="#e3e8f1" stroke="#9aa4b4" stroke-width="0.8"><circle cx="5" cy="25.5" r="4.2"/><circle cx="5" cy="42.5" r="4.2"/><circle cx="5" cy="76.5" r="4.2"/><circle cx="5" cy="178.5" r="4.2"/><circle cx="5" cy="314.5" r="4.2"/></g>
 <g stroke="#1a2340" stroke-width="1.3"><path d="M2.5 25.5H7.5M5 23V28M2.5 42.5H7.5M5 40V45"/><path d="M2.5 76.5H7.5M2.5 178.5H7.5M2.5 314.5H7.5" stroke="#777"/></g>
</svg>
<svg class="a" style="left:530px;top:182px" width="18" height="16"><circle cx="6" cy="6" r="4.5" fill="#fbe88a" stroke="#c9a536" stroke-width="0.8"/><rect x="4" y="10" width="4" height="3" fill="#8a8f9a"/><path d="M11 7L15.5 15H6.5Z" fill="#f4cf40" stroke="#9a7010" stroke-width="0.7"/><path d="M11 9.5V12.5" stroke="#333"/></svg>
<!-- right trim stack -->
<div class="a" style="left:1893px;top:119px;width:26px;height:71px;background:#ebebeb;border:1px solid #c4c4c4;border-radius:5px"></div>
<svg class="a" style="left:1896px;top:122px" width="22" height="64">
 <path d="M5 3H7M9 3H11M13 3H15M17 3H19" stroke="#999"/>
 <rect x="6" y="16" width="7" height="5" fill="#fff" stroke="#444"/><rect x="9" y="13" width="7" height="5" fill="#fff" stroke="#444"/>
 <rect x="5" y="28" width="5" height="5" fill="#fff" stroke="#3a7ac0" stroke-width="1.2"/><rect x="5" y="37" width="5" height="5" fill="#fff" stroke="#3a7ac0" stroke-width="1.2"/><path d="M12 30H18M13 34H15M16 34H18M12 39H18" stroke="#3a7ac0" stroke-width="1.1"/>
 <path d="M6 47H17V59L14 61H6Z" fill="#dde0f0" stroke="#555"/><path d="M8 50H15M8 52H15M8 54H15M8 56H15" stroke="#666" stroke-width="0.8"/>
</svg>
<div class="a" style="left:530px;top:802px;width:1358px;height:250px;overflow:hidden">
<div class="a" style="left:2px;top:140px;width:301px;height:17px;background:#ef7b4f"></div>
<div class="t ui" style="left:2px;top:2px;color:#454545;letter-spacing:0.06px">&lt;terminated&gt; hog [Java Application] /usr/lib/jvm/java-11-oracle/bin/java (22 de mar de 2019 08:27:51)</div>
<div class="a" style="left:0;top:19px;width:1350px;height:1px;background:#dcdcdc"></div>
<div class="a mono" style="left:2px;top:22px;font-size:14px;line-height:17px;letter-spacing:-0.4px;color:#ff0000;white-space:pre">WARNING: An illegal reflective access operation has occurred
WARNING: Illegal reflective access by nu.pattern.OpenCV$SharedLoader (file:/home/cleuton/.m2/repository/org/openpnp/opencv/3.4.2-1/opencv-3.4.2-1.jar) to field java.lang.ClassLoader.usr_paths
WARNING: Please consider reporting this to the maintainers of nu.pattern.OpenCV$SharedLoader
WARNING: Use --illegal-access=warn to enable warnings of further illegal reflective access operations
WARNING: All illegal access operations will be denied in a future release
Java HotSpot(TM) 64-Bit Server VM warning: You have loaded library /tmp/opencv_openpnp8296867928742456644/nu/pattern/opencv/linux/x86_64/libopencv_java342.so which might have disabled stack guard. The VM will try to fix the stack guard now.
It's highly recommended that you fix the library with 'execstack -c &lt;libfile&gt;', or link it with '-z noexecstack'.
<span style="color:#fff">Images are from the same person? true</span></div>
</div>
<!-- console tabs -->
<svg class="a" style="left:532px;top:780px" width="16" height="17"><path d="M1.5 1.5H11L13.5 4V15.5H1.5Z" fill="#fff" stroke="#8090b0" stroke-width="0.9"/><circle cx="5" cy="5.5" r="2.6" fill="#d83030"/><path d="M2.5 10H8L9 15H2Z" fill="#f2b030"/><path d="M9 4V15" stroke="#8090b0"/></svg>
<div class="t ui" style="left:552px;top:781px;color:#3a3a3a">Markers</div>
<svg class="a" style="left:618px;top:780px" width="16" height="16"><rect x="1.5" y="2.5" width="13" height="11" fill="#fff" stroke="#4a5a88"/><path d="M1.5 5H14.5M1.5 8H14.5M1.5 11H14.5M5 5V13.5" stroke="#8898c0" stroke-width="0.8"/><path d="M1.5 3.5H14.5" stroke="#4a5a88" stroke-width="1.5"/></svg>
<div class="t ui" style="left:637px;top:781px;color:#3a3a3a">Properties</div>
<svg class="a" style="left:719px;top:780px" width="15" height="16"><path d="M4 1V15M10 1V15" stroke="#6a7a90" stroke-width="1.2"/><rect x="1.5" y="4" width="5" height="4" fill="#f0c040" stroke="#7a6010" stroke-width="0.7"/><rect x="7.5" y="9" width="5" height="4" fill="#5ab050" stroke="#2a6020" stroke-width="0.7"/></svg>
<div class="t ui" style="left:737px;top:781px;color:#3a3a3a">Servers</div>
<svg class="a" style="left:796px;top:779px" width="17" height="17"><path d="M1 3L5 1L10 3L15 1V13L10 15L5 13L1 15Z" fill="#8ac050" stroke="#4a7a20" stroke-width="0.8"/><path d="M5 1V13M10 3V15" stroke="#4a7a20" stroke-width="0.8"/><rect x="9" y="6" width="7" height="9" fill="#c8d8a0" stroke="#3a5a20" stroke-width="0.8"/></svg>
<div class="t ui" style="left:817px;top:781px;color:#3a3a3a">Data Source Explorer</div>
<svg class="a" style="left:969px;top:780px" width="15" height="17"><path d="M1.5 1.5H9L12.5 5V15.5H1.5Z" fill="#fff" stroke="#8a7a50" stroke-width="0.9"/><path d="M3 5L6 7L3 9" fill="none" stroke="#333" stroke-width="0.9"/><path d="M5 11H11M5 13H11" stroke="#c03030"/><path d="M7 8H11" stroke="#3070c0"/></svg>
<div class="t ui" style="left:988px;top:781px;color:#3a3a3a">Snippets</div>
<svg class="a" style="left:1057px;top:780px" width="16" height="16"><rect x="1.5" y="1.5" width="13" height="10" rx="1" fill="#fff" stroke="#2a4a90" stroke-width="1.6"/><path d="M4 5H11M4 8H9" stroke="#2a4a90" stroke-width="1.2"/><path d="M4 14H12M8 11.5V14" stroke="#2a4a90" stroke-width="1.8"/></svg>
<div class="t ui" style="left:1076px;top:781px;color:#1e1e1e">Console</div>
<svg class="a" style="left:1137px;top:782px" width="13" height="13"><path d="M1.5 3.5L3.5 1.5L6.5 4.5L9.5 1.5L11.5 3.5L8.5 6.5L11.5 9.5L9.5 11.5L6.5 8.5L3.5 11.5L1.5 9.5L4.5 6.5Z" fill="#fff" stroke="#000" stroke-width="1.1" stroke-linejoin="miter"/></svg>
<svg class="a" style="left:1160px;top:781px" width="16" height="16"><rect x="1" y="3" width="11" height="3" fill="#8a9aa0"/><rect x="1" y="7" width="8" height="3" fill="#5a9a50"/><circle cx="11.5" cy="11.5" r="4" fill="#3ab040" stroke="#1a7a20" stroke-width="0.8"/><path d="M10 9.5L13.5 11.5L10 13.5Z" fill="#fff"/></svg>
<div class="t ui" style="left:1179px;top:781px;color:#3a3a3a">Progress</div>
<!-- console toolbar -->
<svg class="a" style="left:1611px;top:778px" width="280" height="20">
 <rect x="2" y="4" width="11" height="11" rx="1.5" fill="#f0a0a8" stroke="#d86878" stroke-width="0.8"/>
 <path d="M21 4L31 14M31 4L21 14" stroke="#555" stroke-width="3"/>
 <path d="M39 4L49 14M49 4L39 14" stroke="#555" stroke-width="3"/><path d="M42 2L52 12M52 2L42 12" stroke="#888" stroke-width="1.2"/>
 <path d="M59 3H66L68 5V15H59Z" fill="#fff" stroke="#6a7ab0" stroke-width="0.8"/><path d="M61 6H66M61 8H66M61 10H65" stroke="#4a5a90" stroke-width="0.8"/><path d="M65 12L69 16M69 12L65 16" stroke="#666" stroke-width="1.3"/>
 <rect x="77" y="10" width="7" height="6" fill="#e8b030" stroke="#8a6010" stroke-width="0.7"/><path d="M78.5 10V8Q80.5 5 82.5 8V10" fill="none" stroke="#555"/><rect x="84" y="3" width="8" height="13" fill="#fff" stroke="#6a7ab0" stroke-width="0.8"/><path d="M86 6H90M86 9H90" stroke="#4a5a90" stroke-width="0.8"/>
 <path d="M95 3H103V15H95Z" fill="#fff" stroke="#a09060" stroke-width="0.8"/><path d="M97 6H101M97 8H101" stroke="#4a5a90" stroke-width="0.8"/><path d="M104 7V11H99M99 11L101 9M99 11L101 13" fill="none" stroke="#d0a030" stroke-width="1.5"/>
 <rect x="112" y="1" width="18" height="17" rx="3" fill="#d6d6d6"/><rect x="114" y="3" width="13" height="9" rx="1" fill="#fff" stroke="#2a4a90" stroke-width="1.2"/><path d="M116 6H124M116 8H122" stroke="#2a4a90"/><path d="M115 15H120" stroke="#2a4a90" stroke-width="1.6"/>
 <rect x="130" y="1" width="18" height="17" rx="3" fill="#d6d6d6"/><rect x="132" y="3" width="13" height="9" rx="1" fill="#fff" stroke="#2a4a90" stroke-width="1.2"/><path d="M136 5L139 8M139 5L136 8" stroke="#d02020"/><path d="M133 15H138" stroke="#2a4a90" stroke-width="1.6"/>
 <rect x="151" y="6" width="12" height="10" fill="#fff" stroke="#3a5a90" stroke-width="0.9"/><path d="M151 7H163" stroke="#3a7ac0" stroke-width="2"/><path d="M158 9L164 3" stroke="#3a9a40" stroke-width="2.2"/>
 <rect x="169" y="3" width="13" height="10" rx="1" fill="#fff" stroke="#2a4a90" stroke-width="1.6"/><path d="M172 6H179M172 9H177" stroke="#2a4a90"/><path d="M171 15H180" stroke="#2a4a90" stroke-width="1.8"/>
 <path d="M188 8H198L193 13Z" fill="#555"/>
 <rect x="205" y="5" width="13" height="11" fill="#fff" stroke="#a09060" stroke-width="0.9"/><path d="M205 7H218" stroke="#3a7ac0" stroke-width="2"/><path d="M214 2L215 5L218 5.5L215 6.5L214 9L213 6.5L210 5.5L213 5Z" fill="#f4c030"/>
 <path d="M223 8H233L228 13Z" fill="#555"/>
 <rect x="240.5" y="5.5" width="9" height="3" fill="#fff" stroke="#000" stroke-width="1.1"/>
 <rect x="258.5" y="6.5" width="9.5" height="9.5" fill="#fff" stroke="#000" stroke-width="1.1"/><path d="M258.5 8H268" stroke="#000" stroke-width="1.2"/>
</svg>
<!-- status bar -->
<svg class="a" style="left:1575px;top:1059px" width="4" height="16"><path d="M1.5 0V16" stroke="#a08a6a" stroke-width="1.2" stroke-dasharray="1.6 2.4"/></svg>
<svg class="a" style="left:1897px;top:1059px" width="4" height="16"><path d="M1.5 0V16" stroke="#a08a6a" stroke-width="1.2" stroke-dasharray="1.6 2.4"/></svg>
<svg class="a" style="left:1905px;top:1059px" width="14" height="18"><circle cx="7" cy="6" r="5" fill="#fde28a" stroke="#e0a830" stroke-width="1"/><rect x="5" y="11" width="4" height="4" fill="#5a6a8a"/></svg>
<svg class="a" style="left:66px;top:492px" width="296" height="413" viewBox="66 492 296 413">
 <defs>
  <filter id="sh" x="-10%" y="-10%" width="120%" height="130%"><feGaussianBlur stdDeviation="1.5"/></filter>
  <linearGradient id="wall1" x1="0" y1="0" x2="1" y2="0"><stop offset="0" stop-color="#eeeeea"/><stop offset="0.5" stop-color="#ebe2d2"/><stop offset="1" stop-color="#e0d2b8"/></linearGradient>
  <radialGradient id="face1" cx="0.5" cy="0.45" r="0.55"><stop offset="0" stop-color="#d4a496"/><stop offset="0.8" stop-color="#b88a7c"/><stop offset="1" stop-color="#a07464"/></radialGradient>
  <radialGradient id="face2" cx="0.5" cy="0.45" r="0.55"><stop offset="0" stop-color="#e0b4a0"/><stop offset="0.8" stop-color="#c08a72"/><stop offset="1" stop-color="#9a6a58"/></radialGradient>
  <clipPath id="ph1"><rect x="167" y="554" width="100" height="96"/></clipPath>
  <clipPath id="ph2"><rect x="166" y="743" width="101" height="96"/></clipPath>
 </defs>
 <path d="M81 493 H355 Q359 493 359 497 V898 Q359 902 355 902 H81 Q77 902 77 898 V711 L67 698 L77 686 V497 Q77 493 81 493Z" fill="#3f3d39" stroke="#2e2d2a" stroke-width="1"/>
 <!-- thumb 1 -->
 <rect x="135" y="538" width="163" height="113" fill="#000" opacity="0.35" filter="url(#sh)"/>
 <rect x="136" y="538" width="161" height="112" fill="#000"/>
 <rect x="136" y="538" width="161" height="16" fill="#3b3a36"/><path d="M136.5 539 V650 M296.5 539 V650" stroke="#8a8884" stroke-width="0.8"/>
 <rect x="143.5" y="543.5" width="5" height="5" fill="#c8c6c0"/><rect x="144.5" y="545.5" width="3" height="1" fill="#333"/>
 <rect x="154" y="540" width="37" height="12" fill="#f2f2f2"/>
 <text x="158" y="549" font-family="Liberation Sans" font-size="6" fill="#777">25%</text>
 <path d="M183 545 L185 547 L187 545" fill="none" stroke="#555" stroke-width="0.8"/>
 <rect x="195.5" y="543.5" width="5" height="5" fill="#c8c6c0"/><rect x="196.5" y="545.5" width="3" height="1" fill="#333"/>
 <text x="209" y="549.5" font-family="Liberation Sans" font-size="7" fill="#8a8884">img...</text>
 <path d="M235 549 L240 544 M235 549V546.5M235 549H237.5M240 544V546.5M240 544H237.5" stroke="#c8c6c0" stroke-width="1"/>
 <path d="M254 544H259M254 546H259M254 548H259" stroke="#d8d6d0" stroke-width="0.9"/>
 <circle cx="273" cy="546" r="3" fill="#4e4d49"/><circle cx="282" cy="546" r="3" fill="#4e4d49"/><circle cx="290" cy="546" r="3" fill="#4e4d49"/>
 <g clip-path="url(#ph1)">
  <rect x="167" y="554" width="100" height="96" fill="url(#wall1)"/>
  <path d="M236 554 L267 596" stroke="#c8b898" stroke-width="1.5"/>
  <path d="M252 554 L267 574" stroke="#c8b898" stroke-width="1.5"/>
  <path d="M238 598 L267 638" stroke="#c8b898" stroke-width="1.5"/>
  <path d="M171 556 Q178 575 172 595" fill="none" stroke="#333" stroke-width="1.2"/>
  <rect x="178" y="556" width="6" height="10" fill="#f4f4f4" stroke="#999" stroke-width="0.5"/>
  <path d="M167 636 Q185 622 200 628 L232 628 Q255 626 267 636 V650 H167Z" fill="#2a9a90"/>
  <path d="M167 634 Q178 628 190 636 L196 650 H167Z" fill="#2a3a40"/>
  <ellipse cx="216" cy="600" rx="28" ry="41" fill="url(#face1)"/>
  <ellipse cx="216" cy="575" rx="23" ry="15" fill="#c8a090" opacity="0.6"/>
  <path d="M189 585 Q190 570 196 566 L192 600Z" fill="#d0ccc8"/>
  <path d="M243 585 Q242 570 236 566 L240 600Z" fill="#d0ccc8"/>
  <path d="M196 616 Q216 650 236 616 Q238 636 216 642 Q194 636 196 616Z" fill="#b4aca4"/>
  <path d="M186 595 H246" stroke="#333" stroke-width="1"/>
  <rect x="192" y="591" width="20" height="10" rx="3" fill="none" stroke="#333" stroke-width="1.1"/>
  <rect x="220" y="591" width="20" height="10" rx="3" fill="none" stroke="#333" stroke-width="1.1"/>
  <path d="M206 626 Q216 621 226 626" stroke="#7a4a40" stroke-width="1.5" fill="none"/>
  <path d="M213 605 L211 614 Q216 617 221 614" stroke="#9a6a5a" stroke-width="1" fill="none"/>
 </g>
 <text x="217.5" y="688" font-family="Liberation Sans" font-size="15" fill="#e8e4dc" text-anchor="middle">img_cleuton_1.jpg</text>
 <!-- thumb 2 -->
 <rect x="135" y="726" width="163" height="114" fill="#000" opacity="0.35" filter="url(#sh)"/>
 <rect x="136" y="727" width="161" height="112" fill="#000"/>
 <rect x="136" y="727" width="161" height="16" fill="#3b3a36"/><path d="M136.5 728 V839 M296.5 728 V839" stroke="#8a8884" stroke-width="0.8"/>
 <rect x="143.5" y="732.5" width="5" height="5" fill="#c8c6c0"/><rect x="144.5" y="734.5" width="3" height="1" fill="#333"/>
 <rect x="154" y="729" width="37" height="12" fill="#f2f2f2"/>
 <text x="158" y="738" font-family="Liberation Sans" font-size="6" fill="#777">52%</text>
 <path d="M183 734 L185 736 L187 734" fill="none" stroke="#555" stroke-width="0.8"/>
 <rect x="195.5" y="732.5" width="5" height="5" fill="#c8c6c0"/><rect x="196.5" y="734.5" width="3" height="1" fill="#333"/>
 <text x="209" y="738.5" font-family="Liberation Sans" font-size="7" fill="#8a8884">cleu...</text>
 <path d="M235 738 L240 733 M235 738V735.5M235 738H237.5M240 733V735.5M240 733H237.5" stroke="#c8c6c0" stroke-width="1"/>
 <path d="M254 733H259M254 735H259M254 737H259" stroke="#d8d6d0" stroke-width="0.9"/>
 <circle cx="273" cy="735" r="3" fill="#4e4d49"/><circle cx="282" cy="735" r="3" fill="#4e4d49"/><circle cx="290" cy="735" r="3" fill="#4e4d49"/>
 <g clip-path="url(#ph2)">
  <rect x="166" y="743" width="101" height="96" fill="#6a7060"/>
  <rect x="166" y="743" width="34" height="96" fill="#2e4a22"/>
  <path d="M168 750 Q176 770 170 790 M176 745 Q184 770 178 800 M186 752 Q192 780 186 810 M194 770 Q198 790 192 815" stroke="#7ab040" stroke-width="3.5" fill="none"/>
  <rect x="200" y="743" width="67" height="50" fill="#dde2e6"/>
  <path d="M236 745 H262 V790 H236Z" fill="#7ab0d8"/>
  <path d="M244 760 H256 V792 H244Z" fill="#3a4050"/>
  <path d="M214 743 V800 M226 743 V800 M250 743 V800 M262 743 V800" stroke="#333" stroke-width="1.5"/>
  <rect x="200" y="793" width="67" height="22" fill="#5a5a3a"/>
  <ellipse cx="208" cy="780" rx="25" ry="34" fill="url(#face2)"/>
  <ellipse cx="208" cy="760" rx="22" ry="14" fill="#d8c8c0" opacity="0.7"/>
  <path d="M186 774 H230" stroke="#444" stroke-width="1"/>
  <path d="M166 822 Q178 806 196 804 L222 804 Q250 808 267 822 V839 H166Z" fill="#1c2030"/>
  <path d="M194 804 L208 839 L222 804Z" fill="#e8ecf0"/>
  <path d="M205 812 L208 839 L211 812Z" fill="#a0a8b8"/>
 </g>
 <text x="217.5" y="877" font-family="Liberation Sans" font-size="15" fill="#e8e4dc" text-anchor="middle">cleuton.jpg</text>
</svg>

</body></html>
